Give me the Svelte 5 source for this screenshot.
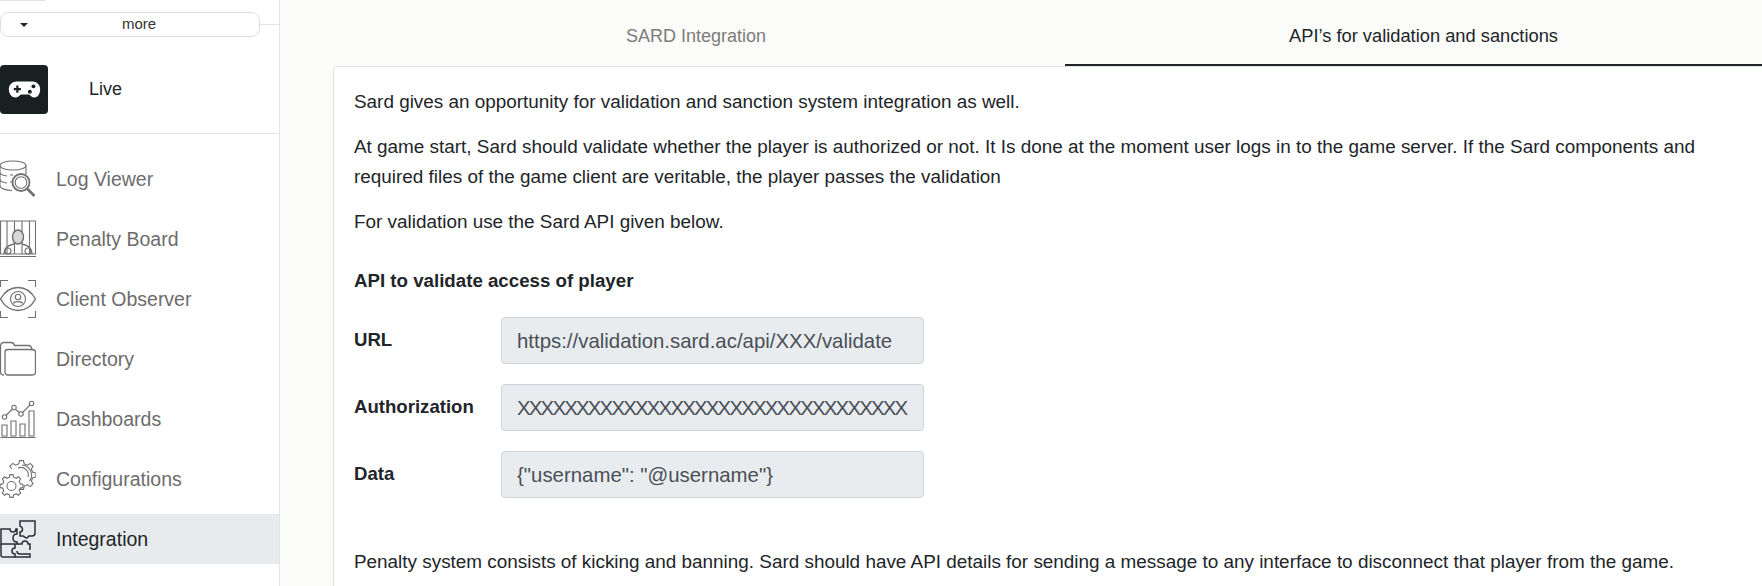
<script>
	const fields = [
		{ label: 'URL', value: 'https://validation.sard.ac/api/XXX/validate' },
		{ label: 'Authorization', value: 'XXXXXXXXXXXXXXXXXXXXXXXXXXXXXXXXX', tight: true },
		{ label: 'Data', value: '{"username": "@username"}' }
	];

	// gear outline as polygon, from angle a to b in degrees
	function gear(cx, cy, outer, inner, teeth, from = 0, to = 360) {
		const pts = [];
		const step = 360 / teeth;
		for (let a = from; a < to; a += step) {
			const offs = [
				[-0.3, inner], [-0.18, outer], [0.18, outer], [0.3, inner]
			];
			for (const [o, r] of offs) {
				const t = ((a + o * step) * Math.PI) / 180;
				pts.push((cx + r * Math.cos(t)).toFixed(1) + ' ' + (cy + r * Math.sin(t)).toFixed(1));
			}
		}
		return 'M' + pts.join('L') + (to - from >= 360 ? 'Z' : '');
	}
</script>

<div class="page">
	<aside class="sidebar">
		<div class="stub"></div>
		<div class="moreRow">
			<button class="more" type="button">
				<span class="caret"></span>
				<span class="moreText">more</span>
			</button>
			<span class="moreLine"></span>
		</div>

		<div class="live">
			<span class="liveIcon">
				<svg width="33" height="17" viewBox="0 0 36 19">
					<path d="M9 0.500h18c4.500 0 8.500 3.500 8.500 8.500 0 6-3 9.500-6.500 9.500-2.500 0-4-2-6-3.500h-9c-2 1.500-3.500 3.500-6 3.500C4 18.500 0.500 15 0.500 9 0.500 4 4.500 0.500 9 0.500z" fill="#fff" />
					<path d="M10 5v8M6 9h8" stroke="#192022" stroke-width="2.400" fill="none" />
					<circle cx="28" cy="6" r="2.200" fill="#192022" />
					<circle cx="24" cy="12" r="2.200" fill="#192022" />
				</svg>
			</span>
			<span class="liveText">Live</span>
		</div>

		<nav class="menu">
			<div class="item">
				<svg class="icon" viewBox="0 0 36 38">
					<ellipse cx="13" cy="5.500" rx="13" ry="4.500" />
					<path d="M0 5.500v20c0 3 6 5 12 5M26 5.500v9M0 12c0 2 3 3.500 7 4M0 19c0 2 3 3.500 7 4" />
					<path d="M10 15h3M10 22h2" />
					<circle cx="21" cy="22.500" r="8.500" stroke-width="1.800" />
					<circle cx="21" cy="22.500" r="5.800" />
					<path d="M27.500 29l7 7" stroke-width="2.600" />
				</svg>
				<span>Log Viewer</span>
			</div>
			<div class="item">
				<svg class="icon" viewBox="0 0 36 38">
					<path d="M0.500 1h35v33H0.500zM0 36.500h36" />
					<path d="M7 1v33M14.500 1v33M22 1v33M29.500 1v33" />
					<ellipse cx="18" cy="17" rx="5.500" ry="7" fill="#d8d8d8" stroke-width="1.400" />
					<path d="M4 34c0-6 5-9 10-10M32 34c0-6-5-9-10-10" stroke-width="1.400" />
					<circle cx="8" cy="31" r="3" />
					<circle cx="28" cy="31" r="3" />
				</svg>
				<span>Penalty Board</span>
			</div>
			<div class="item">
				<svg class="icon" viewBox="0 0 36 38">
					<path d="M0.500 7V0.500H8M28 0.500h7.500V7M0.500 31v6.500H8M28 37.500h7.500V31" />
					<path d="M0.500 19C5 11 11 7.500 18 7.500S31 11 35.500 19C31 27 25 30.500 18 30.500S5 27 0.500 19z" stroke-width="1.400" />
					<circle cx="18" cy="19" r="7.500" />
					<circle cx="18" cy="17" r="2.700" />
					<path d="M13 23.500c1.500-2.500 8.500-2.500 10 0" />
				</svg>
				<span>Client Observer</span>
			</div>
			<div class="item">
				<svg class="icon" viewBox="0 0 36 34">
					<path d="M4 33C2 33 0.500 32 0.500 30V4C0.500 2 2 0.500 4 0.500h7c2 0 3 1 3.500 3H28c3 0 4 2 4 5" stroke-width="1.300" />
					<path d="M8 33c-2 0-3-1-3-3V10c0-1.500 1-2.500 3-2.500h24c2 0 3.500 1 3.500 3V30c0 2-1.500 3-3.500 3z" stroke-width="1.300" />
				</svg>
				<span>Directory</span>
			</div>
			<div class="item">
				<svg class="icon" viewBox="0 0 36 38">
					<circle cx="4.500" cy="17" r="2.200" />
					<circle cx="14" cy="7.500" r="2.200" />
					<circle cx="21" cy="14" r="2.200" />
					<circle cx="31.500" cy="3.500" r="2.200" />
					<path d="M6 15.500l6.500-6.500M15.500 9.500l4 3M22.500 12.500L30 5M0.500 37.500h35" />
					<path d="M2 36V25h5v11zM11 36V21h5v15zM20 36V24h5v12zM29 36V11h5v25z" />
				</svg>
				<span>Dashboards</span>
			</div>
			<div class="item">
				<svg class="icon" viewBox="0 0 36 38">
					<path d={gear(21.500, 15, 14.500, 11.500, 8, -135, 135)} />
					<path d="M18 8a7.500 7.500 0 0 1 10 9" />
					<path d="M22 5a10 10 0 0 1 7.500 16" />
					<path d={gear(11.500, 26, 11.500, 9, 8)} fill="#fff" />
					<circle cx="11.500" cy="26" r="4.500" />
				</svg>
				<span>Configurations</span>
			</div>
			<div class="item active">
				<svg class="icon" viewBox="0 0 36 38">
					<path d="M20 1h15v12c0 2-1 3-3 3h-3c-1 0-1 2-2.500 2S24 16 23 16h-3v-4c2 0 2.500-1 2.500-3S20 6 20 6z" />
					<path d="M1 9h9c0 2 1 3 3 3s3-1 3-3h1v5c-2 0-4 1-4 4s2 4 4 4v2H1z" />
					<path d="M1 24v11c0 1 1 2 2 2h12v-3c-2 0-3-1-3-3s1-3 3-3v-4" />
					<path d="M17 24h5c0-2 1-3 3-3s3 1 3 3h2v5h-1M17 31c0 2 1 3 3 3h10v3H15" />
				</svg>
				<span>Integration</span>
			</div>
		</nav>
	</aside>

	<main class="main">
		<div class="tabs">
			<div class="tab">SARD Integration</div>
			<div class="tab active">API’s for validation and sanctions</div>
		</div>
		<section class="card">
			<p>Sard gives an opportunity for validation and sanction system integration as well.</p>
			<p>At game start, Sard should validate whether the player is authorized or not. It Is done at the moment user logs in to the game server. If the Sard components and required files of the game client are veritable, the player passes the validation</p>
			<p>For validation use the Sard API given below.</p>
			<h4>API to validate access of player</h4>
			<div class="fields">
				{#each fields as field}
					<div class="field">
						<span class="label">{field.label}</span>
						<div class="input" class:tight={field.tight}>{field.value}</div>
					</div>
				{/each}
			</div>
			<p class="penalty">Penalty system consists of kicking and banning. Sard should have API details for sending a message to any interface to disconnect that player from the game.</p>
		</section>
	</main>
</div>

<style>
	:global(body) {
		margin: 0;
		overflow: hidden;
		font-family: 'Liberation Sans', Arial, sans-serif;
	}

	.page {
		display: flex;
		height: 586px;
		overflow: hidden;
		background: #fbfbf9;
		color: #212529;
	}

	.sidebar {
		width: 280px;
		flex: none;
		box-sizing: border-box;
		background: #fff;
		border-right: 1px solid #e4e4e4;
	}

	.stub {
		width: 45px;
		height: 1px;
		background: #e2e2e2;
	}

	.moreRow {
		display: flex;
		align-items: center;
		margin-top: 11px;
		height: 25px;
	}

	.more {
		width: 260px;
		height: 25px;
		flex: none;
		display: flex;
		align-items: center;
		box-sizing: border-box;
		padding: 0 0 2px;
		background: #fff;
		border: 1px solid #e0e0e0;
		border-radius: 8px;
		font-family: inherit;
		font-size: 15px;
		color: #333;
	}

	.caret {
		width: 0;
		height: 0;
		margin-top: 2px;
		margin-left: 19px;
		border-left: 4px solid transparent;
		border-right: 4px solid transparent;
		border-top: 4px solid #212529;
	}

	.moreText {
		margin-left: 94px;
	}

	.moreLine {
		flex: 1;
		height: 1px;
		background: #e4e4e4;
	}

	.live {
		display: flex;
		align-items: center;
		margin-top: 28px;
		padding-bottom: 19px;
		border-bottom: 1px solid #e4e4e4;
	}

	.liveIcon {
		width: 48px;
		height: 49px;
		flex: none;
		display: flex;
		align-items: center;
		justify-content: center;
		background: #192022;
		border-radius: 4px;
	}

	.liveText {
		margin-left: 41px;
		font-size: 18px;
		color: #212529;
	}

	.menu {
		margin-top: 20px;
	}

	.item {
		display: flex;
		align-items: center;
		height: 50px;
		margin-bottom: 10px;
		font-size: 19.500px;
		color: #6c6c6c;
	}

	.item span {
		margin-left: 20px;
	}

	.item.active {
		background: #e8ebee;
		color: #212529;
	}

	.icon {
		width: 36px;
		height: 38px;
		flex: none;
		fill: none;
		stroke: #707070;
		stroke-width: 1.100;
	}

	.item.active .icon {
		stroke: #2b2f33;
		stroke-width: 1.500;
	}

	.main {
		flex: 1;
		min-width: 0;
		padding-left: 53px;
		margin-right: -20px;
	}

	.tabs {
		display: grid;
		grid-template-columns: 738px 1fr;
		height: 66px;
		margin-left: -6px;
	}

	.tab {
		display: flex;
		align-items: center;
		justify-content: center;
		height: 66px;
		box-sizing: border-box;
		padding-top: 6px;
		font-size: 18px;
		color: #7b7b7b;
	}

	.tab.active {
		color: #212529;
		border-bottom: 2px solid #212529;
		padding-top: 8px;
		font-size: 18.300px;
	}

	.card {
		box-sizing: border-box;
		height: 560px;
		padding: 20px 70px 0 20px;
		background: #fff;
		border: 1px solid #e2e2e2;
		border-radius: 4px;
		font-size: 18.900px;
		line-height: 30px;
	}

	p {
		margin: 0 0 15px;
	}

	h4 {
		margin: 29px 0 21px;
		font-size: 18.700px;
		font-weight: 700;
		line-height: 30px;
	}

	.fields {
		display: flex;
		flex-direction: column;
		gap: 20px;
	}

	.field {
		display: flex;
	}

	.label {
		width: 147px;
		flex: none;
		font-size: 18.600px;
		font-weight: 700;
		line-height: 46px;
	}

	.input {
		width: 423px;
		height: 47px;
		box-sizing: border-box;
		padding: 0 15px;
		overflow: hidden;
		white-space: nowrap;
		background: #e9ecef;
		border: 1px solid #ced4da;
		border-radius: 4px;
		color: #495057;
		font-size: 20.400px;
		line-height: 46px;
	}

	.input.tight {
		letter-spacing: -1.800px;
	}

	.penalty {
		margin-top: 49px;
	}
</style>
